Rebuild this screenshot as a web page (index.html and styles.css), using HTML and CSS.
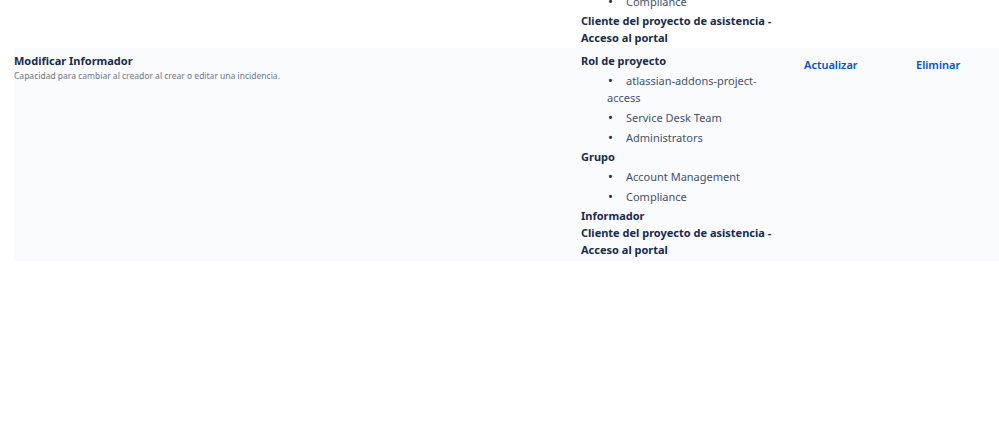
FILE: index.html
```html
<!DOCTYPE html>
<html lang="es">
<head>
    <meta charset="UTF-8">
    <meta name="viewport" content="width=device-width, initial-scale=1.0">
    <title>Permisos del proyecto</title>
    <link rel="stylesheet" href="styles.css">
</head>
<body>
    <table class="perm-table">
        <colgroup>
            <col class="col-name">
            <col class="col-grants">
            <col class="col-edit">
            <col class="col-delete">
        </colgroup>
        <tbody>
            <!-- fila anterior (solo se ve el final) -->
            <tr class="perm-row">
                <td class="perm-name"></td>
                <td class="perm-grants">
                    <div class="grant-type">Rol de proyecto</div>
                    <ul class="grant-list">
                        <li>Service Desk Team</li>
                        <li>Administrators</li>
                    </ul>
                    <div class="grant-type">Grupo</div>
                    <ul class="grant-list">
                        <li>Account Management</li>
                        <li>Compliance</li>
                    </ul>
                    <div class="grant-type">Cliente del proyecto de asistencia - Acceso al portal</div>
                </td>
                <td class="perm-action"></td>
                <td class="perm-action"></td>
            </tr>
            <tr class="perm-row alt">
                <td class="perm-name">
                    <div class="perm-title">Modificar Informador</div>
                    <div class="perm-desc">Capacidad para cambiar al creador al crear o editar una incidencia.</div>
                </td>
                <td class="perm-grants">
                    <div class="grant-type">Rol de proyecto</div>
                    <ul class="grant-list">
                        <li>atlassian-addons-project-access</li>
                        <li>Service Desk Team</li>
                        <li>Administrators</li>
                    </ul>
                    <div class="grant-type">Grupo</div>
                    <ul class="grant-list">
                        <li>Account Management</li>
                        <li>Compliance</li>
                    </ul>
                    <div class="grant-type">Informador</div>
                    <div class="grant-type">Cliente del proyecto de asistencia - Acceso al portal</div>
                </td>
                <td class="perm-action"><a href="#">Actualizar</a></td>
                <td class="perm-action"><a href="#">Eliminar</a></td>
            </tr>
        </tbody>
    </table>
</body>
</html>
```

FILE: styles.css
```css
body {
    font-family: 'Noto Sans', 'Liberation Sans', sans-serif;
    margin: 0;
    background-color: white;
    color: #172b4d;
}

.perm-table {
    border-collapse: collapse;
    table-layout: fixed;
    width: 985px;
    margin-left: 14px;
    margin-top: -110px;
}

.col-name { width: 567px; }
.col-grants { width: 223px; }
.col-edit { width: 112px; }

.perm-row td {
    vertical-align: top;
    padding: 4px 0 2px 0;
}

.perm-row.alt {
    background-color: #fafbfc;
}

.perm-row.alt td {
    padding-bottom: 3px;
}

.perm-title {
    font-size: 11px;
    font-weight: 700;
    line-height: 17px;
}

.perm-desc {
    font-size: 8.5px;
    color: #6b778c;
    line-height: 13px;
}

.perm-row .perm-grants {
    padding-right: 24px;
}

.grant-type {
    font-size: 11px;
    font-weight: 700;
    line-height: 17px;
}

.grant-list {
    margin: 3px 0 2px 0;
    padding-left: 26px;
    list-style: none;
    font-size: 11px;
    line-height: 17px;
    color: #42526e;
}

.grant-list li + li {
    margin-top: 3px;
}

.grant-list li::before {
    content: '\2022';
    display: inline-block;
    width: 18px;
    padding-left: 1px;
    font-size: 13px;
    color: #172b4d;
}

.perm-row .perm-action {
    padding-top: 8px;
    font-size: 11px;
    line-height: 17px;
}

.perm-action a {
    font-weight: 600;
    color: #0052cc;
    text-decoration: none;
}
```
